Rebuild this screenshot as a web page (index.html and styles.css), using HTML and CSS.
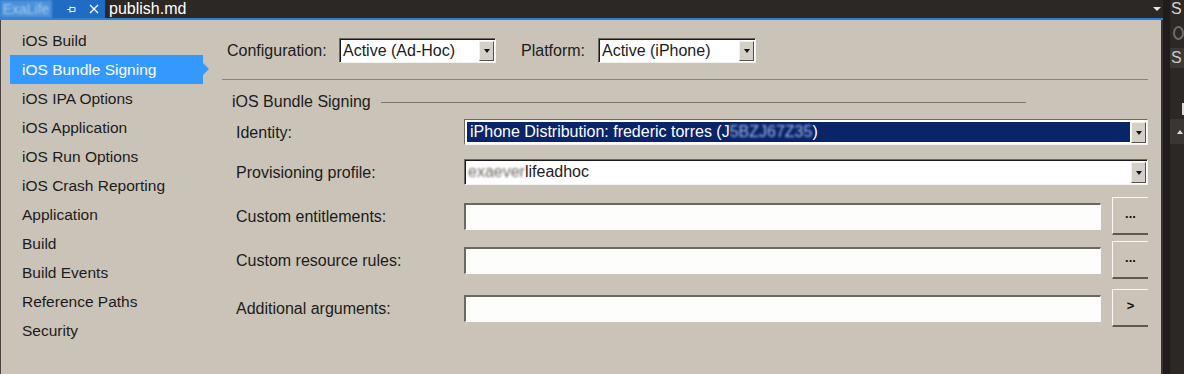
FILE: index.html
```html
<!DOCTYPE html>
<html lang="en">
  <head>
    <meta charset="UTF-8" />
    <title>Project Options - iOS Bundle Signing</title>
    <link rel="stylesheet" href="styles.css">
  </head>
  <body>
    <div class="ide">
      <div class="topbar">
        <div class="doc-tab">
          <span class="tab-blur">ExaLife</span>
          <svg class="tab-pin" width="9" height="7" viewBox="0 0 9 7">
            <path d="M0 3.5H3M3 0.5V6.5M3 1.5H8V5.5H3" stroke="#fff" stroke-width="1" fill="none"/>
          </svg>
          <svg class="tab-close" width="10" height="10" viewBox="0 0 10 10">
            <path d="M1 1L9 9M9 1L1 9" stroke="#fff" stroke-width="1.3"/>
          </svg>
        </div>
        <span class="tab-title">publish.md</span>
        <span class="tab-menu"></span>
      </div>
      <div class="accent"></div>

      <div class="main">
        <div class="nav">
          <div class="nav-item">iOS Build</div>
          <div class="nav-item active">iOS Bundle Signing</div>
          <div class="nav-item">iOS IPA Options</div>
          <div class="nav-item">iOS Application</div>
          <div class="nav-item">iOS Run Options</div>
          <div class="nav-item">iOS Crash Reporting</div>
          <div class="nav-item">Application</div>
          <div class="nav-item">Build</div>
          <div class="nav-item">Build Events</div>
          <div class="nav-item">Reference Paths</div>
          <div class="nav-item">Security</div>
        </div>

        <div class="content">
          <div class="config-row">
            <span class="config-label">Configuration:</span>
            <div class="combo combo-small combo-config">
              <span class="combo-text">Active (Ad-Hoc)</span>
              <span class="combo-btn"><i class="arrow"></i></span>
            </div>
            <span class="platform-label">Platform:</span>
            <div class="combo combo-small combo-platform">
              <span class="combo-text">Active (iPhone)</span>
              <span class="combo-btn"><i class="arrow"></i></span>
            </div>
          </div>

          <div class="rule"></div>

          <div class="group-head">
            <span>iOS Bundle Signing</span>
            <span class="group-line"></span>
          </div>

          <div class="form">
            <div class="form-row row-combo">
              <span class="form-label">Identity:</span>
              <div class="combo combo-wide combo-selected">
                <span class="combo-text">iPhone Distribution: frederic torres (J<span class="blur-sel">5BZJ67Z35</span>)</span>
                <span class="combo-btn"><i class="arrow"></i></span>
              </div>
            </div>
            <div class="form-row row-combo row-gap-14">
              <span class="form-label">Provisioning profile:</span>
              <div class="combo combo-wide">
                <span class="combo-text"><span class="blur-gray">exaever</span>lifeadhoc</span>
                <span class="combo-btn"><i class="arrow"></i></span>
              </div>
            </div>
            <div class="form-row row-field row-gap-12">
              <span class="form-label">Custom entitlements:</span>
              <div class="textbox"></div>
              <button class="browse">...</button>
            </div>
            <div class="form-row row-field row-gap-6">
              <span class="form-label">Custom resource rules:</span>
              <div class="textbox"></div>
              <button class="browse">...</button>
            </div>
            <div class="form-row row-field row-gap-10">
              <span class="form-label">Additional arguments:</span>
              <div class="textbox"></div>
              <button class="browse">&gt;</button>
            </div>
          </div>
        </div>
      </div>
    </div>

    <div class="dock">
      <div class="dock-col">
        <div class="dock-s">S</div>
        <div class="dock-g"><span class="dock-ring"></span></div>
        <div class="dock-box">S</div>
        <div class="dock-tick"></div>
        <div class="dock-bar"><span class="dock-up"></span></div>
      </div>
    </div>
  </body>
</html>
```

FILE: styles.css
```css
body {
  margin: 0;
  width: 1184px;
  height: 374px;
  overflow: hidden;
  display: flex;
  background-color: #2b2725;
  font-family: "Liberation Sans", Arial, sans-serif;
  font-size: 15.5px;
  color: #1c1c1c;
}

.ide {
  width: 1163px;
  display: flex;
  flex-direction: column;
}

/* Document tab strip */
.topbar {
  height: 18px;
  background-color: #2c2826;
  display: flex;
  align-items: center;
}

.doc-tab {
  width: 105px;
  height: 18px;
  background-color: #1e6cc3;
  display: flex;
  align-items: center;
}

.tab-blur {
  width: 52px;
  height: 18px;
  background-color: #4a90da;
  color: #a9cdf2;
  font-size: 14px;
  line-height: 18px;
  text-align: center;
  filter: blur(1.2px);
}

.tab-pin {
  margin-left: 15px;
}

.tab-close {
  margin-left: 13px;
}

.tab-title {
  color: #ffffff;
  font-size: 16px;
  margin-left: 4px;
}

.tab-menu {
  margin-left: auto;
  margin-right: 2px;
  width: 0;
  height: 0;
  border-left: 4px solid transparent;
  border-right: 4px solid transparent;
  border-top: 4px solid #e8e8e8;
}

.accent {
  height: 2px;
  background-color: #2e7fd4;
}

.main {
  flex: 1;
  display: flex;
  background-color: #cac3b7;
  border-left: 1px solid #4a4440;
  border-right: 2px solid #3a3230;
}

/* Left navigation */
.nav {
  width: 222px;
  padding-top: 6px;
}

.nav-item {
  position: relative;
  height: 29px;
  line-height: 29px;
  width: 193px;
  margin-left: 9px;
  padding-left: 12px;
  box-sizing: border-box;
}

.nav-item.active {
  background-color: #3399ff;
  color: #ffffff;
}

.nav-item.active::after {
  content: "";
  position: absolute;
  right: -6px;
  top: 8px;
  border-left: 6px solid #3399ff;
  border-top: 6px solid transparent;
  border-bottom: 6px solid transparent;
}

/* Options page */
.content {
  flex: 1;
  padding-top: 18px;
  padding-right: 13px;
  font-size: 16px;
}

.config-row {
  display: flex;
  align-items: center;
  height: 25px;
  padding-left: 5px;
}

.config-label {
  width: 112px;
}

.platform-label {
  margin-left: 25px;
  width: 77px;
}

.combo {
  display: flex;
  box-sizing: border-box;
  background-color: #ffffff;
  border-top: 1px solid #6d685f;
  border-left: 1px solid #6d685f;
  border-bottom: 1px solid #f4f2ee;
  border-right: 1px solid #f4f2ee;
  box-shadow: inset 1px 1px 0 #1a1a1a;
}

.combo-small {
  height: 25px;
}

.combo-config {
  width: 157px;
}

.combo-platform {
  width: 158px;
}

.combo-wide {
  flex: 1;
  height: 26px;
}

.combo-text {
  flex: 1;
  padding-left: 3px;
  padding-top: 1px;
  line-height: 22px;
  white-space: nowrap;
  overflow: hidden;
}

.combo-selected {
  box-shadow: none;
}

.combo-selected .combo-text {
  background-color: #0a246a;
  color: #ffffff;
  margin: 2px 0 2px 2px;
  padding-top: 0;
  line-height: 20px;
}

.blur-sel {
  color: #9fb5e8;
  filter: blur(0.9px);
}

.blur-gray {
  color: #6f6a65;
  filter: blur(1.1px);
}

.combo-btn {
  width: 15px;
  margin: 2px 1px 1px 1px;
  box-sizing: border-box;
  background-color: #d4d0c8;
  border-top: 1px solid #f3f1ec;
  border-left: 1px solid #f3f1ec;
  border-bottom: 1px solid #55514b;
  border-right: 1px solid #55514b;
  display: flex;
  align-items: center;
  justify-content: center;
}

.arrow {
  width: 0;
  height: 0;
  border-left: 3.5px solid transparent;
  border-right: 3.5px solid transparent;
  border-top: 4px solid #111111;
}

.rule {
  margin-top: 16px;
  height: 1px;
  background-color: #8a847a;
}

.group-head {
  margin-top: 13px;
  height: 18px;
  padding-left: 10px;
  display: flex;
  align-items: center;
}

.group-line {
  margin-left: 10px;
  width: 645px;
  height: 1px;
  background-color: #7c766d;
}

.form {
  margin-top: 8px;
  padding-left: 14px;
}

.form-row {
  display: flex;
  align-items: center;
}

.row-combo {
  height: 26px;
}

.row-field {
  height: 38px;
}

.row-gap-14 { margin-top: 14px; }
.row-gap-12 { margin-top: 12px; }
.row-gap-10 { margin-top: 10px; }
.row-gap-6 { margin-top: 6px; }

.form-label {
  width: 228px;
  padding-top: 1px;
}

.textbox {
  width: 637px;
  height: 27px;
  box-sizing: border-box;
  background-color: #fdfdfc;
  border-top: 2px solid #6d685f;
  border-left: 2px solid #6d685f;
  border-bottom: 1px solid #fbfaf8;
  border-right: 1px solid #fbfaf8;
}

.browse {
  margin-left: 11px;
  width: 36px;
  height: 38px;
  padding: 0 0 4px 0;
  background-color: #cac3b7;
  border: none;
  border-top: 1px solid #faf8f4;
  border-left: 1px solid #faf8f4;
  border-bottom: 2px solid #5d5850;
  font-family: "Liberation Sans", Arial, sans-serif;
  font-size: 13px;
  font-weight: bold;
  color: #111111;
}

/* Docked panel on the right */
.dock {
  width: 21px;
  background-color: #1f1c1b;
  display: flex;
  justify-content: flex-end;
}

.dock-col {
  width: 14px;
  background-color: #2b2826;
  overflow: hidden;
}

.dock-s {
  height: 18px;
  color: #d8d4cf;
  font-size: 16px;
  line-height: 18px;
  padding-left: 1px;
}

.dock-g {
  height: 30px;
  display: flex;
  align-items: center;
  padding-left: 3px;
}

.dock-ring {
  width: 8px;
  height: 10px;
  border: 2px solid #6e6a66;
  border-radius: 50%;
}

.dock-box {
  height: 20px;
  background-color: #3c3836;
  color: #cfcac4;
  font-size: 16px;
  line-height: 20px;
  padding-left: 1px;
}

.dock-tick {
  margin-top: 35px;
  margin-left: 12px;
  width: 2px;
  height: 12px;
  background-color: #dcdcdc;
}

.dock-bar {
  margin-top: 4px;
  height: 25px;
  background-color: #3a3634;
  display: flex;
  align-items: center;
  justify-content: flex-end;
}

.dock-up {
  width: 0;
  height: 0;
  margin-right: 1px;
  border-left: 3px solid transparent;
  border-right: 3px solid transparent;
  border-bottom: 4px solid #dcdcdc;
}
```
